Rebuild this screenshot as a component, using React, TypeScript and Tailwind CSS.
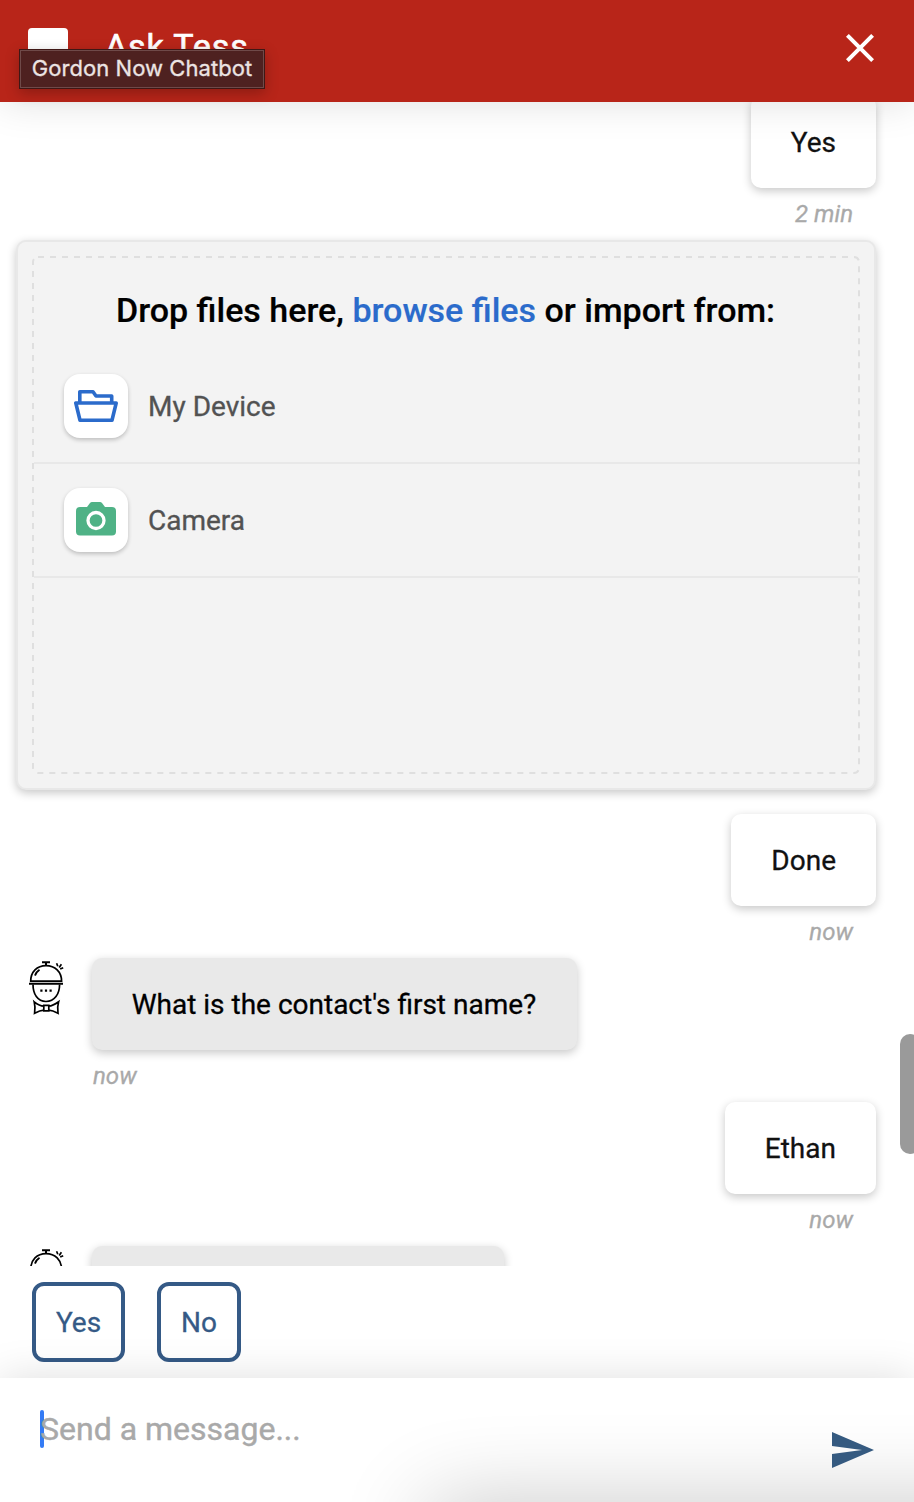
import React from "react";

function Time({ children, side }: { children: string; side: "left" | "right" }) {
  return (
    <div
      className={
        side === "right"
          ? "flex h-[52px] shrink-0 items-center justify-end pr-[61px] text-[24px] italic text-[#a9a9a9] [-webkit-text-stroke:0.3px_#a9a9a9]"
          : "flex h-[52px] shrink-0 items-center pl-[93px] text-[24px] italic text-[#a9a9a9] [-webkit-text-stroke:0.3px_#a9a9a9]"
      }
    >
      <span>{children}</span>
    </div>
  );
}

function UserMessage({ text, time }: { text: string; time: string }) {
  return (
    <>
      <div className="flex shrink-0 justify-end pr-[38px]">
        <div className="flex h-[92px] items-center rounded-[10px] bg-white px-10 pt-[2px] text-[28px] text-[#111] shadow-[0_3px_10px_rgba(0,0,0,0.22)] [-webkit-text-stroke:0.3px_#111]">
          {text}
        </div>
      </div>
      <Time side="right">{time}</Time>
    </>
  );
}

function Butler() {
  return (
    <svg width="36" height="56" viewBox="0 0 36 56" fill="none" stroke="#000" strokeWidth="1.7">
      <path d="M14 2.200h8M18 2v4" strokeWidth="2" />
      <path d="M2.700 21.200C2.700 12 9 5.600 18 5.600s15.600 6.400 15.600 15.600z" />
      <path d="M7.300 14.800c.8-2 2-3.500 3.600-4.600" strokeLinecap="round" strokeWidth="2" />
      <path d="M29.800 6.200l-1.200-3M31.200 7.400l2.200-3.200M32.200 9l3-1.300" strokeWidth="1.700" />
      <path d="M1 23.700h34" strokeWidth="2" />
      <path d="M5 24.500C5 34 9.500 41.500 18 41.500S31.600 34 31.600 24.500" />
      <path d="M12.300 30.600h2.200M16.900 30.600h2.200M21.500 30.600h2.200" strokeWidth="2.200" />
      <path d="M15.800 46.200C12.500 46 9 44 6.200 41.800q1.400 5.500.4 11.400c3-1.500 6-2.800 9.200-3M20.800 46.200C24 46 27.500 44 30.600 41.800q-1.600 5.500-.6 11.400c-3-1.500-6-2.800-9.200-3M15.800 45.300h5v5.600h-5z" />
    </svg>
  );
}

function BotMessage({ children, box }: { children?: React.ReactNode; box: string }) {
  return (
    <div className="flex shrink-0 items-start pl-7">
      <div className="w-16 shrink-0 pt-[2px]">
        <Butler />
      </div>
      <div className={box}>{children}</div>
    </div>
  );
}

function Source({ label, children }: { label: string; children: React.ReactNode }) {
  return (
    <div className="flex h-[114px] items-center gap-5 border-b-2 border-[#e8e8e8] pl-[30px]">
      <div className="flex size-16 items-center justify-center rounded-2xl bg-white shadow-[0_2px_4px_rgba(0,0,0,0.22)]">
        {children}
      </div>
      <span className="pt-[2px] text-[28px] text-[#525252] [-webkit-text-stroke:0.3px_#525252]">{label}</span>
    </div>
  );
}

export default function App() {
  return (
    <div className="relative flex h-[1502px] w-[914px] flex-col overflow-hidden bg-white font-['Roboto',sans-serif]">
      <header className="relative z-10 flex h-[102px] shrink-0 items-start bg-[#b82519] shadow-[0_0_40px_rgba(0,0,0,0.13)]">
        <div className="ml-7 mt-7 size-10 rounded bg-white" />
        <h1 className="ml-[37px] mt-6 text-[34px] leading-[44px] tracking-[0.9px] text-white [-webkit-text-stroke:0.7px_#fff]">Ask Tess</h1>
        <svg className="ml-auto mr-10 mt-[34px]" width="28" height="28" viewBox="0 0 28 28" stroke="#fff" strokeWidth="4">
          <path d="M1.400 1.400 26.600 26.600M26.600 1.400 1.400 26.600" />
        </svg>
        <div className="absolute left-[19px] top-[49px] flex h-10 w-[246px] items-center justify-center border border-[#3f1715] bg-[#4e2120] font-['Inter',sans-serif] text-[22px] text-[#ece4e3] shadow-[0_4px_14px_rgba(0,0,0,0.25),inset_0_0_0_1px_#6f4a49] [-webkit-text-stroke:0.3px_#ece4e3]">
          <span className="whitespace-nowrap pb-[2px] tracking-[0.07px]">Gordon Now Chatbot</span>
        </div>
      </header>

      <main className="flex h-[1164px] shrink-0 flex-col overflow-hidden">
        <div className="-mt-[6px] flex shrink-0 flex-col">
          <UserMessage text="Yes" time="2 min" />
          <section className="mb-6 ml-4 flex h-[550px] w-[860px] shrink-0 flex-col rounded-[10px] border-2 border-[#e8e8e8] bg-[#f3f3f3] p-[14px] shadow-[0_3px_10px_rgba(0,0,0,0.22)]">
            <div className="relative flex flex-1 flex-col p-[2px]">
              <svg className="absolute inset-0" width="828" height="518" fill="none">
                <rect x="1" y="1" width="826" height="516" rx="5" stroke="#dfdfdf" strokeWidth="2" strokeDasharray="6 6" />
              </svg>
              <h2 className="flex h-[92px] items-center justify-center pr-px pt-[12px] text-[34px] font-medium text-black [-webkit-text-stroke:0.2px]">
                <span>
                  Drop files here, <span className="text-[#2b6bcb]">browse files</span> or import from:
                </span>
              </h2>
              <Source label="My Device">
                <svg width="44" height="32" viewBox="0 0 44 32" fill="none" stroke="#2b6bcb" strokeWidth="3.600" strokeLinejoin="round">
                  <path d="M5.800 12V1.800h13.200l3 4.200h15.700V12" />
                  <path d="M1.800 13h40.400l-4.200 17.200H6z" />
                </svg>
              </Source>
              <Source label="Camera">
                <svg className="-mt-[2px]" width="40" height="34" viewBox="0 0 40 34">
                  <path fill="#4fb286" d="M4 5h7l3-4q.8-1 2-1h8q1.200 0 2 1l3 4h7q4 0 4 4v20.500q0 4-4 4H4q-4 0-4-4V9q0-4 4-4z" />
                  <circle cx="20" cy="18.500" r="8" fill="none" stroke="#fff" strokeWidth="3.300" />
                </svg>
              </Source>
            </div>
          </section>
          <UserMessage text="Done" time="now" />
          <BotMessage box="flex h-[92px] w-[485px] items-center justify-center rounded-[10px] bg-[#e9e9e9] pt-[2px] pr-px text-[28px] text-black shadow-[0_3px_10px_rgba(0,0,0,0.22)] [-webkit-text-stroke:0.3px_#000]">
            What is the contact's first name?
          </BotMessage>
          <Time side="left">now</Time>
          <UserMessage text="Ethan" time="now" />
          <BotMessage box="h-[92px] w-[412px] rounded-[10px] bg-[#e9e9e9] shadow-[0_3px_10px_rgba(0,0,0,0.22)]" />
        </div>
      </main>

      <div className="flex h-28 shrink-0 gap-8 bg-white pl-8 pt-4 text-[28px] text-[#355a86] [-webkit-text-stroke:0.3px_#355a86]">
        <button className="h-20 w-[93px] rounded-xl border-4 border-[#355a86] bg-white pt-[2px]">Yes</button>
        <button className="h-20 w-[84px] rounded-xl border-4 border-[#355a86] bg-white pt-[2px]">No</button>
      </div>

      <footer className="relative z-10 flex h-[124px] shrink-0 bg-white pl-10 shadow-[0_0_40px_rgba(0,0,0,0.13)]">
        <div className="absolute inset-0 overflow-hidden">
          <div className="absolute left-[430px] top-[128px] h-20 w-[640px] shadow-[0_0_90px_rgba(0,0,0,0.24)]" />
        </div>
        <div className="relative mt-8 h-[38px] w-1 rounded-sm bg-[#347bf5]" />
        <span className="relative -ml-1 mt-[31px] text-[32px] leading-[40px] text-[#a9a9a9] [-webkit-text-stroke:0.4px_#a9a9a9]">Send a message...</span>
        <svg className="relative ml-auto mr-10 mt-[54px]" width="42" height="36" viewBox="0 0 42 36">
          <path fill="#355a80" d="M0 0 42 18 0 36V22l30-4L0 14z" />
        </svg>
      </footer>

      <div className="absolute -right-[6px] top-[1034px] z-20 h-[120px] w-5 rounded-[10px] bg-[#9a9a9a]" />
    </div>
  );
}
